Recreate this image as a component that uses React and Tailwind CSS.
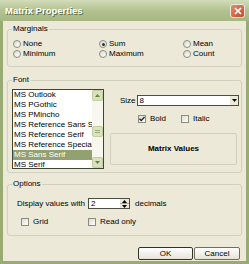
import React from 'react';

const fonts = [
  'MS Outlook',
  'MS PGothic',
  'MS PMincho',
  'MS Reference Sans Serif',
  'MS Reference Serif',
  'MS Reference Specialty',
  'MS Sans Serif',
  'MS Serif',
];

const Radio = ({ label, checked }) => (
  <div className="flex items-center gap-[2px] h-[10px]">
    <span className="w-[8px] h-[8px] rounded-full border border-[#8c8c7c] bg-gradient-to-br from-[#dcdcd0] to-white flex items-center justify-center">
      {checked && <span className="w-[3px] h-[3px] rounded-full bg-[#2c2c2c]" />}
    </span>
    <span>{label}</span>
  </div>
);

const Check = ({ label, checked }) => (
  <div className="flex items-center gap-[4px] h-[10px]">
    <span className="w-[8px] h-[8px] border border-[#8c8c7c] bg-gradient-to-br from-[#dcdcd0] to-white flex items-center justify-center">
      {checked && (
        <svg width="6" height="6" viewBox="0 0 6 6">
          <path d="M0.5 2.8 L2.3 4.6 L5.5 1" stroke="#222" strokeWidth="1.4" fill="none" />
        </svg>
      )}
    </span>
    <span>{label}</span>
  </div>
);

const Arrow = ({ up, color = '#3d4a26' }) => (
  <svg width="5" height="3" viewBox="0 0 5 3">
    <path d={up ? 'M0 3 L2.5 0 L5 3 Z' : 'M0 0 L5 0 L2.5 3 Z'} fill={color} />
  </svg>
);

const Group = ({ title, className = '', children }) => (
  <fieldset className={`border border-[#d0d0bf] rounded-[3px] pl-[4px] ${className}`}>
    <legend className="px-[1px] h-[10px] leading-[10px]">{title}</legend>
    {children}
  </fieldset>
);

const App = () => {
  return (
    <div className="w-[249px] h-[264px] flex flex-col bg-[#97ab72] font-['Liberation_Sans',Arial,sans-serif] text-[8px] leading-[10px] text-black">
      {/* title bar */}
      <div className="h-[21px] flex items-center justify-between pl-[5px] pr-[4px] bg-gradient-to-b from-[#d3dcb8] via-[#b3c291] to-[#a6b783]">
        <span className="text-white font-bold text-[9.5px] [text-shadow:1px_1px_0_#5e6c40]">Matrix Properties</span>
        <div className="w-[15px] h-[14px] rounded-[3px] border border-[#f2e6dc] bg-gradient-to-br from-[#e58a6c] to-[#c34a2c] flex items-center justify-center">
          <svg width="8" height="8" viewBox="0 0 8 8">
            <path d="M1 1 L7 7 M7 1 L1 7" stroke="#fff" strokeWidth="1.7" />
          </svg>
        </div>
      </div>

      <div className="flex-1 mx-[3px] mb-[3px] bg-[#ece9d8] pt-[3px] pl-[4px] pr-[4px] flex flex-col">
        <Group title="Marginals" className="pt-[5px] pb-[7px]">
          <div className="grid grid-cols-[86px_84px_1fr] pl-[1px]">
            <Radio label="None" />
            <Radio label="Sum" checked />
            <Radio label="Mean" />
            <Radio label="Minimum" />
            <Radio label="Maximum" />
            <Radio label="Count" />
          </div>
        </Group>

        <Group title="Font" className="mt-[8px] pt-[4px] pb-[3px]">
          <div className="flex">
            <div className="w-[92px] h-[80px] border border-[#3f4434] bg-white flex">
              <div className="flex-1 overflow-hidden">
                {fonts.map((f) => (
                  <div
                    key={f}
                    className={`h-[10px] pl-[1px] whitespace-nowrap ${f === 'MS Sans Serif' ? 'bg-[#93a070] text-white' : ''}`}
                  >
                    {f}
                  </div>
                ))}
              </div>
              <div className="w-[11px] flex flex-col bg-[#f7f7f0]">
                <div className="h-[11px] border border-[#c2cfa0] rounded-[2px] bg-[#d8e0bc] flex items-center justify-center">
                  <Arrow up color="#6f8046" />
                </div>
                <div className="flex-1 flex flex-col">
                  <div className="mt-[25px] h-[11px] border border-[#c2cfa0] rounded-[2px] bg-[#dbe2c2] flex flex-col items-center justify-center gap-[1px]">
                    <span className="w-[5px] h-px bg-[#9aab74]" />
                    <span className="w-[5px] h-px bg-[#9aab74]" />
                  </div>
                </div>
                <div className="h-[11px] border border-[#c2cfa0] rounded-[2px] bg-[#d8e0bc] flex items-center justify-center">
                  <Arrow color="#6f8046" />
                </div>
              </div>
            </div>

            <div className="ml-[6px] w-[129px] flex flex-col">
              <div className="mt-[6px] flex items-center pl-[10px] gap-[1px]">
                <span>Size</span>
                <div className="w-[103px] h-[11px] border border-[#4a4d40] bg-white flex items-center">
                  <span className="flex-1 pl-[2px]">8</span>
                  <div className="w-[9px] h-[9px] bg-[#ece9d8] border-l border-[#fff] flex items-center justify-center">
                    <Arrow color="#000" />
                  </div>
                </div>
              </div>
              <div className="mt-[8px] flex pl-[28px]">
                <div className="w-[43px]">
                  <Check label="Bold" checked />
                </div>
                <Check label="Italic" />
              </div>
              <div className="mt-[9px] mr-[2px] h-[32px] border border-[#d0d0bf] rounded-[2px] flex items-center justify-center font-bold">
                Matrix Values
              </div>
            </div>
          </div>
        </Group>

        <Group title="Options" className="mt-[6px] pt-[9px] pb-[8px]">
          <div className="flex items-center pl-[5px] h-[11px]">
            <span>Display values with</span>
            <div className="ml-[3px] w-[42px] h-[11px] border border-[#4a4d40] bg-white flex">
              <span className="flex-1 pl-[2px] leading-[9px]">2</span>
              <div className="w-[9px] flex flex-col bg-[#ece9d8]">
                <div className="flex-1 border-b border-[#a8a89a] flex items-center justify-center">
                  <Arrow up color="#000" />
                </div>
                <div className="flex-1 flex items-center justify-center">
                  <Arrow color="#000" />
                </div>
              </div>
            </div>
            <span className="ml-[5px]">decimals</span>
          </div>
          <div className="mt-[8px] flex pl-[9px]">
            <div className="w-[67px]">
              <Check label="Grid" />
            </div>
            <Check label="Read only" />
          </div>
        </Group>

        <div className="mt-[11px] flex justify-end gap-[1px] pr-[2px]">
          <button className="w-[55px] h-[13px] border border-[#2f3424] rounded-[2px] bg-gradient-to-b from-white to-[#e6e3d6] text-[8px] leading-[11px]">
            OK
          </button>
          <button className="w-[46px] h-[13px] border border-[#6b7060] rounded-[2px] bg-gradient-to-b from-white to-[#e6e3d6] text-[8px] leading-[11px]">
            Cancel
          </button>
        </div>
      </div>
    </div>
  );
};

export default App;
